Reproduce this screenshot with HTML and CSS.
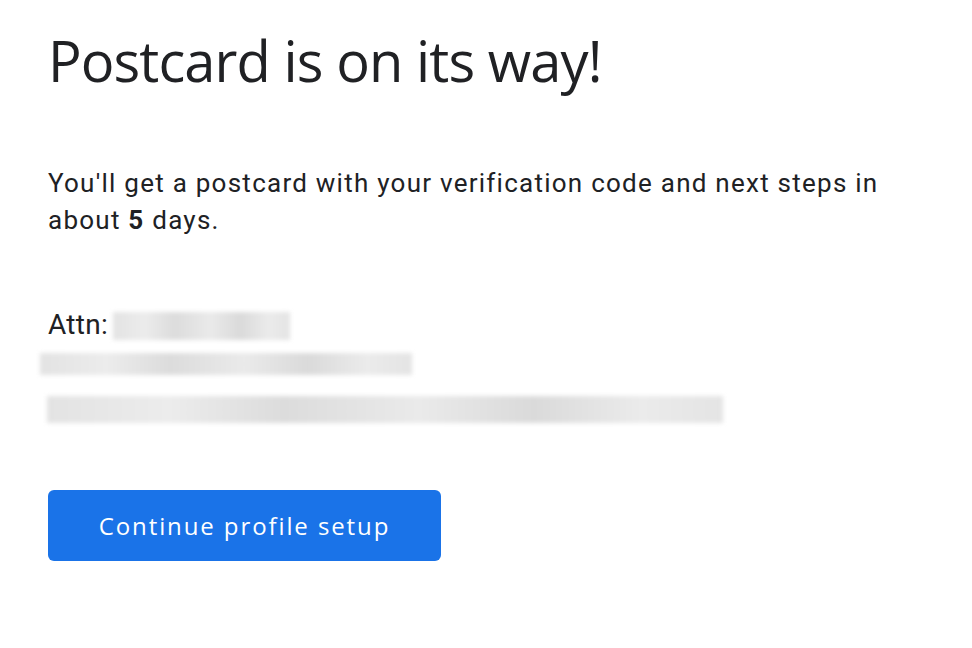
FILE: index.html
```html
<!DOCTYPE html>
<html>
<head>
<meta charset="utf-8">
<link rel="stylesheet" href="styles.css">
</head>
<body>
<main class="page">
  <h1 class="title">Postcard is on its way!</h1>
  <p class="lead">You'll get a postcard with your verification code and next steps in about <b>5</b> days.</p>
  <div class="address">
    <div class="line"><span class="attn">Attn:</span><span class="blur blur-name"></span></div>
    <div class="line"><span class="blur blur-company"></span></div>
    <div class="line"><span class="blur blur-street"></span></div>
  </div>
  <button class="btn">Continue profile setup</button>
</main>
</body>
</html>
```
FILE: styles.css
```css
html, body {
  margin: 0;
  padding: 0;
  background: #ffffff;
}
.page {
  padding: 28px 48px 0 48px;
  font-family: Roboto, "Liberation Sans", sans-serif;
  color: #202124;
}
.title {
  margin: 0;
  font-family: "Open Sans", Roboto, sans-serif;
  font-weight: 400;
  font-size: 56px;
  line-height: 64px;
  letter-spacing: -0.9px;
  color: #202124;
}
.lead {
  margin: 73px 0 0 0;
  font-size: 26px;
  line-height: 37px;
  letter-spacing: 1.25px;
  max-width: 860px;
}
.lead b {
  font-weight: 700;
}
.address {
  margin-top: 66px;
  font-size: 28px;
  line-height: 40px;
  display: flex;
  flex-direction: column;
}
.line {
  height: 40px;
  display: flex;
  align-items: flex-start;
}
.attn {
  letter-spacing: 0.3px;
}
.blur {
  display: block;
  background: linear-gradient(90deg, #e3e3e3 0%, #ececec 18%, #dcdcdc 35%, #eaeaea 55%, #dadada 72%, #ebebeb 88%, #e4e4e4 100%);
  filter: blur(2px);
}
.blur-name {
  width: 177px;
  height: 28px;
  margin-top: 7px;
  margin-left: 5px;
}
.blur-company {
  width: 372px;
  height: 22px;
  margin-top: 8px;
  margin-left: -8px;
}
.blur-street {
  width: 676px;
  height: 27px;
  margin-top: 11px;
  margin-left: -1px;
}
.btn {
  display: block;
  margin-top: 65px;
  width: 393px;
  height: 71px;
  padding: 0;
  border: none;
  border-radius: 6px;
  background: #1a73e8;
  color: #ffffff;
  font-family: "Open Sans", Roboto, sans-serif;
  font-size: 24px;
  font-weight: 500;
  letter-spacing: 1.9px;
  cursor: pointer;
}
```
